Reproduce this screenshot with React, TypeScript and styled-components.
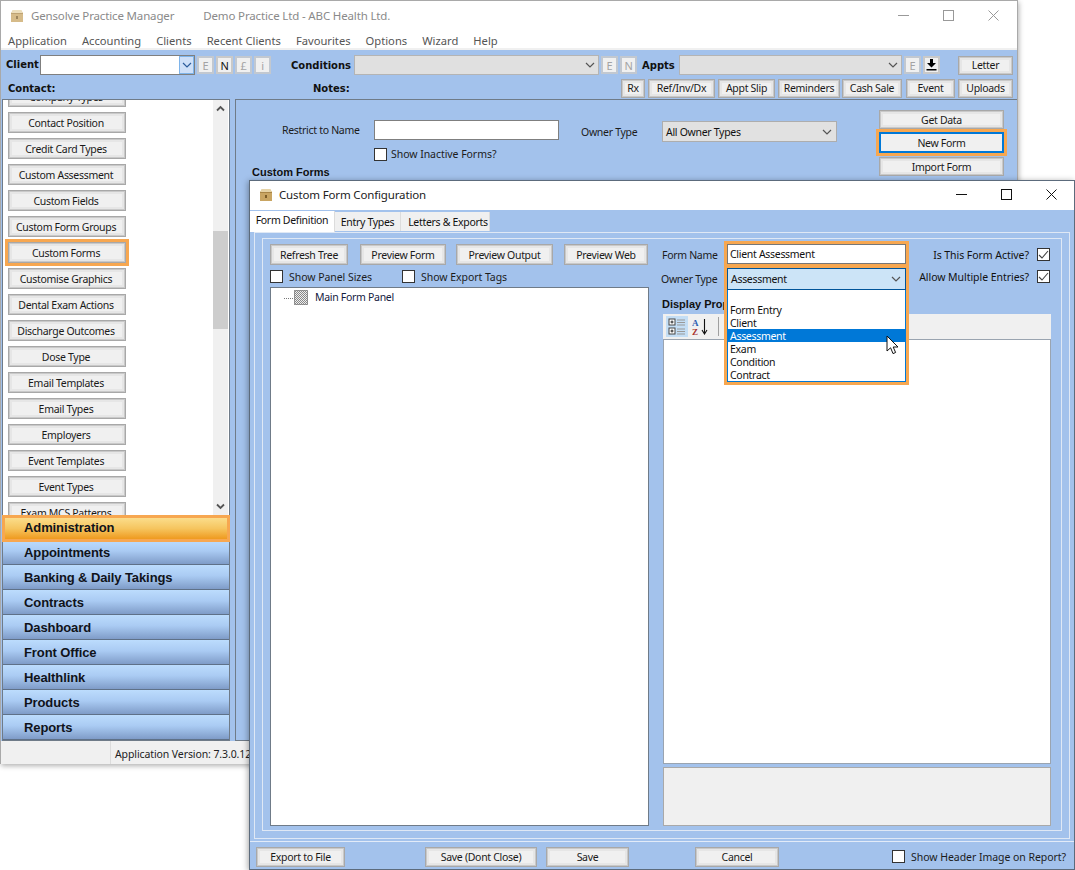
import React from 'react';
import styled, { createGlobalStyle } from 'styled-components';

const UI_FONT = '"Noto Sans", "Open Sans", sans-serif';
const BLUE = '#a3c2ec';
const MARK = '#f7a750';

const GlobalStyle = createGlobalStyle`
  html, body {
    margin: 0;
    padding: 0;
    background: #fff;
  }
  body {
    font-family: ${UI_FONT};
    font-size: 10.5px;
    letter-spacing: -0.3px;
    color: #111;
  }
  * { box-sizing: border-box; }
`;

const Desktop = styled.div`
  position: relative;
  width: 1075px;
  height: 870px;
  overflow: hidden;
  background: #fff;
`;

const MainWindow = styled.div`
  position: absolute;
  left: 0;
  top: 0;
  width: 1018px;
  height: 764px;
  display: flex;
  flex-direction: column;
  background: #fff;
  border: 1px solid #a9a9a9;
  border-bottom: 0;
  box-shadow: 1px 2px 5px rgba(0, 0, 0, 0.3);
`;

const ConfigWindow = styled.div`
  position: absolute;
  left: 249px;
  top: 180px;
  width: 826px;
  height: 690px;
  display: flex;
  flex-direction: column;
  background: ${BLUE};
  border: 1px solid #5c6b7c;
  box-shadow: -1px 1px 6px rgba(0, 0, 0, 0.35);
`;

const TitleBar = styled.div<{ $pad: number; $dim?: boolean; $lift?: number }>`
  height: 29px;
  flex: none;
  display: flex;
  align-items: center;
  background: #fff;
  padding-left: ${(p) => p.$pad}px;
  padding-bottom: ${(p) => p.$lift ?? 0}px;
  font-size: 11.5px;
  letter-spacing: -0.15px;
  color: ${(p) => (p.$dim ? '#8a8a8a' : '#222')};
`;

const TitleText = styled.span<{ $left: number }>`
  margin-left: ${(p) => p.$left}px;
  white-space: nowrap;
`;

const WinControls = styled.div<{ $gap: number; $right: number }>`
  margin-left: auto;
  margin-right: ${(p) => p.$right}px;
  display: flex;
  gap: ${(p) => p.$gap}px;
  align-items: center;
`;

const MenuBar = styled.div`
  height: 20px;
  flex: none;
  display: flex;
  align-items: center;
  gap: 15px;
  padding: 3px 0 0 7px;
  background: #fff;
  border-bottom: 2px solid #f0f0f0;
  color: #555;
  font-size: 11.2px;
  letter-spacing: 0;
`;

const Toolbar = styled.div`
  height: 49px;
  flex: none;
  padding-top: 5px;
  background: ${BLUE};
  display: flex;
  flex-direction: column;
  gap: 3px;
`;

const ToolRow = styled.div`
  height: 20px;
  display: flex;
  align-items: center;
`;

const BoldLabel = styled.span<{ $left?: number; $w?: number; $lift?: boolean }>`
  font-family: "DejaVu Sans", sans-serif;
  font-weight: 700;
  font-size: 10px;
  letter-spacing: 0;
  color: #111;
  white-space: nowrap;
  margin-left: ${(p) => p.$left ?? 0}px;
  width: ${(p) => (p.$w ? `${p.$w}px` : 'auto')};
  padding-bottom: ${(p) => (p.$lift ? 2 : 0)}px;
`;

const ComboShell = styled.div<{ $w: number; $off?: boolean }>`
  width: ${(p) => p.$w}px;
  height: 20px;
  flex: none;
  display: flex;
  align-items: center;
  justify-content: flex-end;
  background: ${(p) => (p.$off ? '#e0e0e0' : '#fff')};
  border: 1px solid ${(p) => (p.$off ? '#b4b4b4' : '#7f7f7f')};
`;

const ComboArrow = styled.div`
  width: 15px;
  height: 18px;
  display: flex;
  align-items: center;
  justify-content: center;
  background: #cfe0f8;
  border: 1px solid #7eb4ea;
`;

const ChevronSlot = styled.div`
  width: 17px;
  display: flex;
  justify-content: center;
`;

const SquareBtn = styled.div<{ $left?: number; $off?: boolean }>`
  width: 17px;
  height: 18px;
  flex: none;
  margin-left: ${(p) => p.$left ?? 0}px;
  display: flex;
  align-items: center;
  justify-content: center;
  background: #f0f0f0;
  border: 2px solid ${(p) => (p.$off ? '#c2c8d0' : '#c9c9c9')};
  color: ${(p) => (p.$off ? '#a3a3a3' : '#111')};
  font-size: 11px;
`;

const Btn = styled.div<{ $w: number; $h?: number; $left?: number; $top?: number; $focus?: boolean }>`
  width: ${(p) => p.$w}px;
  height: ${(p) => p.$h ?? 20}px;
  flex: none;
  margin-left: ${(p) => p.$left ?? 0}px;
  margin-top: ${(p) => p.$top ?? 0}px;
  display: flex;
  align-items: center;
  justify-content: center;
  white-space: nowrap;
  background: #f0f0f0;
  border: 1px solid #a8a8a8;
  box-shadow: inset 0 0 0 1px #c9c9c9, inset 0 0 0 3px #e6e6e6;
  color: #1a1a1a;
  font-size: 10.5px;
  ${(p) =>
    p.$focus &&
    `
    border: 2px solid #0078d7;
    box-shadow: 0 0 0 3px ${MARK};
  `}
`;

const Body = styled.div`
  flex: 1;
  min-height: 0;
  display: flex;
  background: ${BLUE};
`;

const LeftColumn = styled.div`
  width: 228px;
  flex: none;
  margin-left: 1px;
  display: flex;
  flex-direction: column;
`;

const ListPane = styled.div`
  height: 416px;
  flex: none;
  display: flex;
  overflow: hidden;
  background: #fff;
  border: 1px solid #6f7b88;
  border-bottom: 0;
`;

const ButtonList = styled.div`
  flex: 1;
  margin-top: -14px;
  padding-left: 5px;
  display: flex;
  flex-direction: column;
  gap: 5px;
`;

const ListBtn = styled(Btn)<{ $mark?: boolean }>`
  padding-right: 2px;
  ${(p) => p.$mark && `outline: 3px solid ${MARK}; outline-offset: 0;`}
`;

const ScrollTrack = styled.div`
  width: 15px;
  flex: none;
  margin-right: 1px;
  display: flex;
  flex-direction: column;
  align-items: center;
  background: #f0f0f0;
  padding: 5px 0;
`;

const ScrollThumb = styled.div`
  width: 15px;
  height: 98px;
  margin-top: 119px;
  margin-bottom: auto;
  background: #cdcdcd;
`;

const NavBar = styled.div`
  height: 226px;
  flex: none;
  display: flex;
  flex-direction: column;
  border-left: 1px solid #6f7b88;
  border-right: 1px solid #6f7b88;
  border-bottom: 1px solid #6f7b88;
`;

const NavItem = styled.div<{ $active?: boolean }>`
  height: 25px;
  flex: none;
  display: flex;
  align-items: center;
  padding-left: 21px;
  font-family: "Liberation Sans", Arial, sans-serif;
  font-weight: 700;
  font-size: 13px;
  letter-spacing: -0.1px;
  color: #10131a;
  border-bottom: 1px solid #5f7188;
  background: linear-gradient(#bcdcfd, #aacbf3 45%, #7f9cc8);
  ${(p) =>
    p.$active &&
    `
    height: 27px;
    margin: 0 -1px -2px;
    padding: 0 0 3px 19px;
    border: 3px solid ${MARK};
    background: linear-gradient(#fbdd8b, #f6c55f 50%, #ef9a1f) padding-box;
    position: relative;
    z-index: 1;
  `}
`;

const RightPanel = styled.div`
  flex: 1;
  margin-left: 5px;
  height: 642px;
  background: ${BLUE};
  border-top: 1px solid #6f7b88;
  border-left: 1px solid #6f7b88;
  border-bottom: 1px solid #6f7b88;
  padding: 10px 0 0 46px;
  display: flex;
  align-items: flex-start;
`;

const FilterColumn = styled.div`
  width: 278px;
  flex: none;
  display: flex;
  flex-direction: column;
`;

const FilterRow = styled.div`
  display: flex;
  align-items: center;
  height: 20px;
  margin-top: 10px;
`;

const FieldLabel = styled.span<{ $w?: number; $left?: number; $down?: number }>`
  width: ${(p) => (p.$w ? `${p.$w}px` : 'auto')};
  flex: none;
  margin-left: ${(p) => p.$left ?? 0}px;
  padding-top: ${(p) => p.$down ?? 0}px;
  white-space: nowrap;
  color: #1c1c1c;
  font-size: 10.5px;
`;

const TextBox = styled.div<{ $w: number }>`
  width: ${(p) => p.$w}px;
  height: 20px;
  flex: none;
  display: flex;
  align-items: center;
  padding-left: 2px;
  background: #fff;
  border: 1px solid #7f7f7f;
`;

const CheckRow = styled.label<{ $left?: number; $top?: number; $end?: boolean; $gap?: number }>`
  display: flex;
  align-items: center;
  gap: ${(p) => p.$gap ?? 6}px;
  margin-left: ${(p) => (p.$end ? 'auto' : `${p.$left ?? 0}px`)};
  margin-top: ${(p) => p.$top ?? 0}px;
  white-space: nowrap;
  font-size: 10.5px;
  letter-spacing: -0.05px;
  color: #1c1c1c;
`;

const CheckBox = styled.span`
  width: 13px;
  height: 13px;
  flex: none;
  display: flex;
  align-items: center;
  justify-content: center;
  background: #fff;
  border: 1px solid #333;
`;

const SectionTitle = styled.div<{ $left?: number; $top?: number }>`
  font-family: "Liberation Sans", Arial, sans-serif;
  font-weight: 700;
  font-size: 11px;
  line-height: 13px;
  letter-spacing: 0;
  color: #111;
  white-space: nowrap;
  margin-left: ${(p) => p.$left ?? 0}px;
  margin-top: ${(p) => p.$top ?? 0}px;
`;

const OwnerFilter = styled.div`
  display: flex;
  align-items: center;
  height: 21px;
  margin-top: 11px;
`;

const SelectBox = styled.div<{ $w: number }>`
  width: ${(p) => p.$w}px;
  height: 21px;
  flex: none;
  display: flex;
  align-items: center;
  justify-content: space-between;
  padding: 0 4px 0 3px;
  background: #e1e1e1;
  border: 1px solid #adadad;
  font-size: 10.5px;
`;

const ActionStack = styled.div`
  margin-left: 42px;
  display: flex;
  flex-direction: column;
  gap: 3px;
`;

const StatusBar = styled.div`
  height: 23px;
  flex: none;
  display: flex;
  align-items: stretch;
  background: #f0f0f0;
  padding-left: 109px;
  font-size: 10.5px;
  letter-spacing: -0.1px;
  white-space: nowrap;
  color: #222;
`;

const StatusText = styled.span`
  display: flex;
  align-items: center;
  padding: 2px 0 0 4px;
  border-left: 1px solid #dcdcdc;
`;

/* config dialog */

const TabStrip = styled.div`
  height: 22px;
  flex: none;
  padding-top: 1px;
  display: flex;
  align-items: flex-start;
`;

const Tab = styled.div<{ $active?: boolean; $w: number; $shift?: number }>`
  width: ${(p) => p.$w}px;
  height: ${(p) => (p.$active ? 21 : 19)}px;
  margin-top: ${(p) => (p.$active ? 0 : 1)}px;
  padding-left: ${(p) => p.$shift ?? 0}px;
  padding-bottom: ${(p) => (p.$active ? 3 : 0)}px;
  display: flex;
  align-items: center;
  justify-content: center;
  background: ${(p) => (p.$active ? '#fff' : '#f0f0f0')};
  border-right: 1px solid #dcdcdc;
  font-size: 10.5px;
  color: #111;
  white-space: nowrap;
`;

const TabPanel = styled.div`
  flex: 1;
  min-height: 0;
  margin: 0 4px 2px 4px;
  padding: 5px 7px 7px 7px;
  border: 1px solid #dfe8f5;
  display: flex;
`;

const GroupBox = styled.div`
  flex: 1;
  min-width: 0;
  display: flex;
  gap: 14px;
  padding: 5px 10px 4px 7px;
  border: 1px solid #dfe8f5;
`;

const TreeColumn = styled.div`
  width: 379px;
  flex: none;
  display: flex;
  flex-direction: column;
`;

const TreeButtons = styled.div`
  display: flex;
  height: 21px;
`;

const TreeOptions = styled.div`
  display: flex;
  height: 13px;
  margin-top: 5px;
`;

const TreeBox = styled.div`
  flex: 1;
  margin-top: 4px;
  padding: 2px 0 0 13px;
  background: #fff;
  border: 1px solid #6f7b88;
  display: flex;
  align-items: flex-start;
`;

const TreeLabel = styled.span`
  margin-left: 7px;
  line-height: 15px;
  color: #14213f;
  font-size: 10.5px;
`;

const FormColumn = styled.div`
  flex: 1;
  min-width: 0;
  display: flex;
  flex-direction: column;
`;

const FormRow = styled.div<{ $top?: number }>`
  height: 21px;
  margin-top: ${(p) => p.$top ?? 0}px;
  display: flex;
  align-items: center;
`;

const RightCheck = styled.div`
  margin-left: auto;
  margin-right: 1px;
  display: flex;
  align-items: center;
  gap: 8px;
  white-space: nowrap;
  letter-spacing: -0.05px;
`;

const PropToolbar = styled.div`
  height: 25px;
  margin-top: 3px;
  flex: none;
  display: flex;
  align-items: center;
  padding-left: 3px;
  gap: 2px;
  background: #f0f0f0;
`;

const ToolIcon = styled.div<{ $on?: boolean }>`
  width: 22px;
  height: 21px;
  display: flex;
  align-items: center;
  justify-content: center;
  background: ${(p) => (p.$on ? '#c4def5' : 'transparent')};
`;

const ToolSep = styled.div`
  width: 1px;
  height: 19px;
  background: #a0a0a0;
  margin: 0 4px;
`;

const PropGrid = styled.div`
  flex: 1;
  min-height: 0;
  background: #fff;
  border: 1px solid #9aa4b0;
`;

const HelpBox = styled.div`
  height: 59px;
  flex: none;
  margin-top: 3px;
  background: #f0f0f0;
  border: 1px solid #a9a9a9;
`;

const FooterBar = styled.div`
  height: 28px;
  flex: none;
  display: flex;
  align-items: center;
  padding: 2px 8px 0 6px;
  border-top: 1px solid #e2ebf8;
`;

const DropHighlight = styled.div`
  position: absolute;
  left: 474px;
  top: 60px;
  width: 185px;
  height: 144px;
  display: flex;
  flex-direction: column;
  border: 3px solid ${MARK};
  z-index: 3;
`;

const NameBox = styled.div`
  height: 20px;
  flex: none;
  display: flex;
  align-items: center;
  padding-left: 2px;
  font-size: 10.5px;
  background: #fff;
  border: 1px solid #777;
`;

const HighlightRule = styled.div`
  height: 4px;
  flex: none;
  background: ${MARK};
`;

const OwnerOpen = styled.div`
  height: 22px;
  flex: none;
  display: flex;
  align-items: center;
  justify-content: space-between;
  padding: 0 4px 0 3px;
  background: #cce4f7;
  border: 1px solid #005499;
  font-size: 10.5px;
`;

const OwnerList = styled.div`
  flex: 1;
  padding-top: 13px;
  background: #fff;
  border: 1px solid #0078d7;
  border-top: 0;
  display: flex;
  flex-direction: column;
`;

const OwnerOption = styled.div<{ $on?: boolean }>`
  height: 13px;
  flex: none;
  line-height: 14px;
  padding-left: 2px;
  font-size: 10.5px;
  background: ${(p) => (p.$on ? '#0078d7' : 'transparent')};
  color: ${(p) => (p.$on ? '#fff' : '#111')};
`;

const CursorMark = styled.svg`
  position: absolute;
  left: 636px;
  top: 154px;
  z-index: 4;
`;

const Chevron = ({ color = '#555', w = 10 }: { color?: string; w?: number }) => (
  <svg width={w} height="6" viewBox="0 0 10 6">
    <polyline points="1,1 5,5 9,1" fill="none" stroke={color} strokeWidth="1.2" />
  </svg>
);

const BoldChevron = ({ up }: { up?: boolean }) => (
  <svg width="9" height="7" viewBox="0 0 9 7">
    <polyline points={up ? '1,5.5 4.5,2 8,5.5' : '1,1.5 4.5,5 8,1.5'} fill="none" stroke="#555" strokeWidth="1.8" />
  </svg>
);

const BoxIcon = ({ faded }: { faded?: boolean }) => (
  <svg width="14" height="14" viewBox="0 0 14 14" opacity={faded ? 0.75 : 1}>
    <path d="M1 4 L3 1 H11 L13 4 V13 H1 Z" fill="#c9a562" />
    <path d="M1 4 L3 1 H11 L13 4 Z" fill="#e6d3a6" />
    <rect x="1" y="4" width="12" height="1" fill="#a98546" />
    <rect x="6" y="7" width="2" height="3" fill="#7d5d27" />
  </svg>
);

const MinIcon = ({ color }: { color: string }) => (
  <svg width="11" height="11" viewBox="0 0 11 11">
    <line x1="0" y1="5.5" x2="11" y2="5.5" stroke={color} />
  </svg>
);

const MaxIcon = ({ color }: { color: string }) => (
  <svg width="11" height="11" viewBox="0 0 11 11">
    <rect x="0.5" y="0.5" width="10" height="10" fill="none" stroke={color} />
  </svg>
);

const CloseIcon = ({ color }: { color: string }) => (
  <svg width="11" height="11" viewBox="0 0 11 11">
    <path d="M0.5 0.5 L10.5 10.5 M10.5 0.5 L0.5 10.5" stroke={color} fill="none" />
  </svg>
);

const Tick = () => (
  <svg width="11" height="11" viewBox="0 0 11 11">
    <polyline points="1,6 4,9 10,2" fill="none" stroke="#444" strokeWidth="1.1" />
  </svg>
);

const DownloadIcon = () => (
  <svg width="11" height="12" viewBox="0 0 11 12">
    <path d="M4 0 H7 V4 H10 L5.5 8.5 L1 4 H4 Z" fill="#000" />
    <rect x="0.5" y="10" width="10" height="1.5" fill="#000" />
  </svg>
);

const TreeNodeIcon = () => (
  <svg width="24" height="15" viewBox="0 0 24 15">
    <defs>
      <pattern id="stipple" width="2" height="2" patternUnits="userSpaceOnUse">
        <rect width="2" height="2" fill="#eee" />
        <rect width="1" height="1" fill="#888" />
        <rect x="1" y="1" width="1" height="1" fill="#888" />
      </pattern>
    </defs>
    <line x1="0" y1="8.5" x2="10" y2="8.5" stroke="#777" strokeDasharray="1 1" />
    <rect x="10.5" y="0.5" width="13" height="14" fill="url(#stipple)" stroke="#444" strokeDasharray="1 1" />
  </svg>
);

const CategorizedIcon = () => (
  <svg width="18" height="17" viewBox="0 0 18 17">
    <rect x="1" y="1" width="6" height="6" fill="#fff" stroke="#444" />
    <rect x="1" y="10" width="6" height="6" fill="#fff" stroke="#444" />
    <path d="M2.5 4 H5.5 M4 2.5 V5.5 M2.5 13 H5.5 M4 11.5 V14.5" stroke="#222" />
    <path d="M9 2 H17 M9 4.5 H17 M9 7 H17 M9 11 H17 M9 13.5 H17 M9 16 H17" stroke="#999" />
  </svg>
);

const SortIcon = () => (
  <svg width="18" height="17" viewBox="0 0 18 17">
    <text x="0" y="8" fontFamily="Liberation Serif, serif" fontSize="9" fontWeight="700" fill="#2a5db0">A</text>
    <text x="0" y="16.5" fontFamily="Liberation Serif, serif" fontSize="9" fontWeight="700" fill="#a8322d">Z</text>
    <path d="M12.5 1 V15 M10 12 L12.5 16 L15 12" stroke="#111" fill="none" strokeWidth="1.1" />
  </svg>
);

const PagesIcon = () => (
  <svg width="12" height="16" viewBox="0 0 12 16">
    <rect x="0.5" y="0.5" width="11" height="15" fill="#e4e4e4" stroke="#b5b5b5" />
  </svg>
);

const listItems = [
  'Company Types',
  'Contact Position',
  'Credit Card Types',
  'Custom Assessment',
  'Custom Fields',
  'Custom Form Groups',
  'Custom Forms',
  'Customise Graphics',
  'Dental Exam Actions',
  'Discharge Outcomes',
  'Dose Type',
  'Email Templates',
  'Email Types',
  'Employers',
  'Event Templates',
  'Event Types',
  'Exam MCS Patterns',
];

const navItems = [
  'Administration',
  'Appointments',
  'Banking & Daily Takings',
  'Contracts',
  'Dashboard',
  'Front Office',
  'Healthlink',
  'Products',
  'Reports',
];

const menuItems = ['Application', 'Accounting', 'Clients', 'Recent Clients', 'Favourites', 'Options', 'Wizard', 'Help'];

const quickButtons: [string, number, number][] = [
  ['Rx', 24, 0],
  ['Ref/Inv/Dx', 67, 3],
  ['Appt Slip', 57, 3],
  ['Reminders', 62, 3],
  ['Cash Sale', 60, 2],
  ['Event', 49, 4],
  ['Uploads', 55, 3],
];

const ownerOptions = ['Form Entry', 'Client', 'Assessment', 'Exam', 'Condition', 'Contract'];

const App = () => (
  <Desktop>
    <GlobalStyle />
    <MainWindow>
      <TitleBar $pad={9} $dim>
        <BoxIcon faded />
        <TitleText $left={7}>Gensolve Practice Manager</TitleText>
        <TitleText $left={29}>Demo Practice Ltd - ABC Health Ltd.</TitleText>
        <WinControls $gap={34} $right={18}>
          <MinIcon color="#999" />
          <MaxIcon color="#999" />
          <CloseIcon color="#999" />
        </WinControls>
      </TitleBar>
      <MenuBar>
        {menuItems.map((m) => (
          <span key={m}>{m}</span>
        ))}
      </MenuBar>
      <Toolbar>
        <ToolRow>
          <BoldLabel $left={5} $w={34} $lift>Client</BoldLabel>
          <ComboShell $w={155}>
            <ComboArrow>
              <Chevron color="#2d5c9c" />
            </ComboArrow>
          </ComboShell>
          <SquareBtn $left={2} $off>E</SquareBtn>
          <SquareBtn $left={2}>N</SquareBtn>
          <SquareBtn $left={2} $off>£</SquareBtn>
          <SquareBtn $left={2} $off>i</SquareBtn>
          <BoldLabel $left={20} $w={63}>Conditions</BoldLabel>
          <ComboShell $w={245} $off>
            <ChevronSlot>
              <Chevron />
            </ChevronSlot>
          </ComboShell>
          <SquareBtn $left={2} $off>E</SquareBtn>
          <SquareBtn $left={2} $off>N</SquareBtn>
          <BoldLabel $left={5} $w={37}>Appts</BoldLabel>
          <ComboShell $w={223} $off>
            <ChevronSlot>
              <Chevron />
            </ChevronSlot>
          </ComboShell>
          <SquareBtn $left={2} $off>E</SquareBtn>
          <SquareBtn $left={2}>
            <DownloadIcon />
          </SquareBtn>
          <Btn $w={55} $h={19} $left={18}>Letter</Btn>
        </ToolRow>
        <ToolRow>
          <BoldLabel $left={7} $w={305}>Contact:</BoldLabel>
          <BoldLabel $w={308}>Notes:</BoldLabel>
          {quickButtons.map(([label, w, left]) => (
            <Btn key={label} $w={w} $h={19} $left={left}>
              {label}
            </Btn>
          ))}
        </ToolRow>
      </Toolbar>
      <Body>
        <LeftColumn>
          <ListPane>
            <ButtonList>
              {listItems.map((item) => (
                <ListBtn key={item} $w={118} $h={21} $mark={item === 'Custom Forms'}>
                  {item}
                </ListBtn>
              ))}
            </ButtonList>
            <ScrollTrack>
              <BoldChevron up />
              <ScrollThumb />
              <BoldChevron />
            </ScrollTrack>
          </ListPane>
          <NavBar>
            {navItems.map((item) => (
              <NavItem key={item} $active={item === 'Administration'}>
                {item}
              </NavItem>
            ))}
          </NavBar>
        </LeftColumn>
        <RightPanel>
          <FilterColumn>
            <FilterRow>
              <FieldLabel $w={92}>Restrict to Name</FieldLabel>
              <TextBox $w={185} />
            </FilterRow>
            <CheckRow $left={92} $top={7} $gap={4}>
              <CheckBox />
              Show Inactive Forms?
            </CheckRow>
            <SectionTitle $left={-30} $top={5}>Custom Forms</SectionTitle>
          </FilterColumn>
          <OwnerFilter>
            <FieldLabel $w={81} $left={21}>Owner Type</FieldLabel>
            <SelectBox $w={175}>
              All Owner Types
              <Chevron />
            </SelectBox>
          </OwnerFilter>
          <ActionStack>
            <Btn $w={125} $h={19}>Get Data</Btn>
            <Btn $w={125} $h={21} $focus>New Form</Btn>
            <Btn $w={125} $h={19} $top={1}>Import Form</Btn>
          </ActionStack>
        </RightPanel>
      </Body>
      <StatusBar>
        <StatusText>Application Version: 7.3.0.12</StatusText>
      </StatusBar>
    </MainWindow>

    <ConfigWindow>
      <TitleBar $pad={9} $lift={2}>
        <BoxIcon />
        <TitleText $left={6}>Custom Form Configuration</TitleText>
        <WinControls $gap={34} $right={17}>
          <MinIcon color="#111" />
          <MaxIcon color="#111" />
          <CloseIcon color="#111" />
        </WinControls>
      </TitleBar>
      <TabStrip>
        <Tab $active $w={85}>Form Definition</Tab>
        <Tab $w={66}>Entry Types</Tab>
        <Tab $w={89} $shift={6}>Letters &amp; Exports</Tab>
      </TabStrip>
      <TabPanel>
        <GroupBox>
          <TreeColumn>
            <TreeButtons>
              <Btn $w={78} $h={21}>Refresh Tree</Btn>
              <Btn $w={86} $h={21} $left={12}>Preview Form</Btn>
              <Btn $w={97} $h={21} $left={10}>Preview Output</Btn>
              <Btn $w={84} $h={21} $left={11}>Preview Web</Btn>
            </TreeButtons>
            <TreeOptions>
              <CheckRow>
                <CheckBox />
                Show Panel Sizes
              </CheckRow>
              <CheckRow $left={30}>
                <CheckBox />
                Show Export Tags
              </CheckRow>
            </TreeOptions>
            <TreeBox>
              <TreeNodeIcon />
              <TreeLabel>Main Form Panel</TreeLabel>
            </TreeBox>
          </TreeColumn>
          <FormColumn>
            <FormRow>
              <FieldLabel $left={-1}>Form Name</FieldLabel>
              <RightCheck>
                Is This Form Active?
                <CheckBox>
                  <Tick />
                </CheckBox>
              </RightCheck>
            </FormRow>
            <FormRow $top={1}>
              <FieldLabel $left={-2} $down={5}>Owner Type</FieldLabel>
              <RightCheck>
                Allow Multiple Entries?
                <CheckBox>
                  <Tick />
                </CheckBox>
              </RightCheck>
            </FormRow>
            <SectionTitle $left={-1} $top={11}>Display Properties</SectionTitle>
            <PropToolbar>
              <ToolIcon $on>
                <CategorizedIcon />
              </ToolIcon>
              <ToolIcon>
                <SortIcon />
              </ToolIcon>
              <ToolSep />
              <PagesIcon />
            </PropToolbar>
            <PropGrid />
            <HelpBox />
          </FormColumn>
        </GroupBox>
      </TabPanel>
      <FooterBar>
        <Btn $w={89}>Export to File</Btn>
        <Btn $w={112} $left={80}>Save (Dont Close)</Btn>
        <Btn $w={83} $left={9}>Save</Btn>
        <Btn $w={84} $left={66}>Cancel</Btn>
        <CheckRow $end>
          <CheckBox />
          Show Header Image on Report?
        </CheckRow>
      </FooterBar>
      <DropHighlight>
        <NameBox>Client Assessment</NameBox>
        <HighlightRule />
        <OwnerOpen>
          Assessment
          <Chevron />
        </OwnerOpen>
        <OwnerList>
          {ownerOptions.map((o) => (
            <OwnerOption key={o} $on={o === 'Assessment'}>
              {o}
            </OwnerOption>
          ))}
        </OwnerList>
      </DropHighlight>
      <CursorMark width="14" height="21" viewBox="0 0 14 21">
        <path d="M1 1 V16 L4.6 12.8 L7 18.6 L9.6 17.5 L7.2 12 H12 Z" fill="#fff" stroke="#111" strokeWidth="1" />
      </CursorMark>
    </ConfigWindow>
  </Desktop>
);

export default App;
